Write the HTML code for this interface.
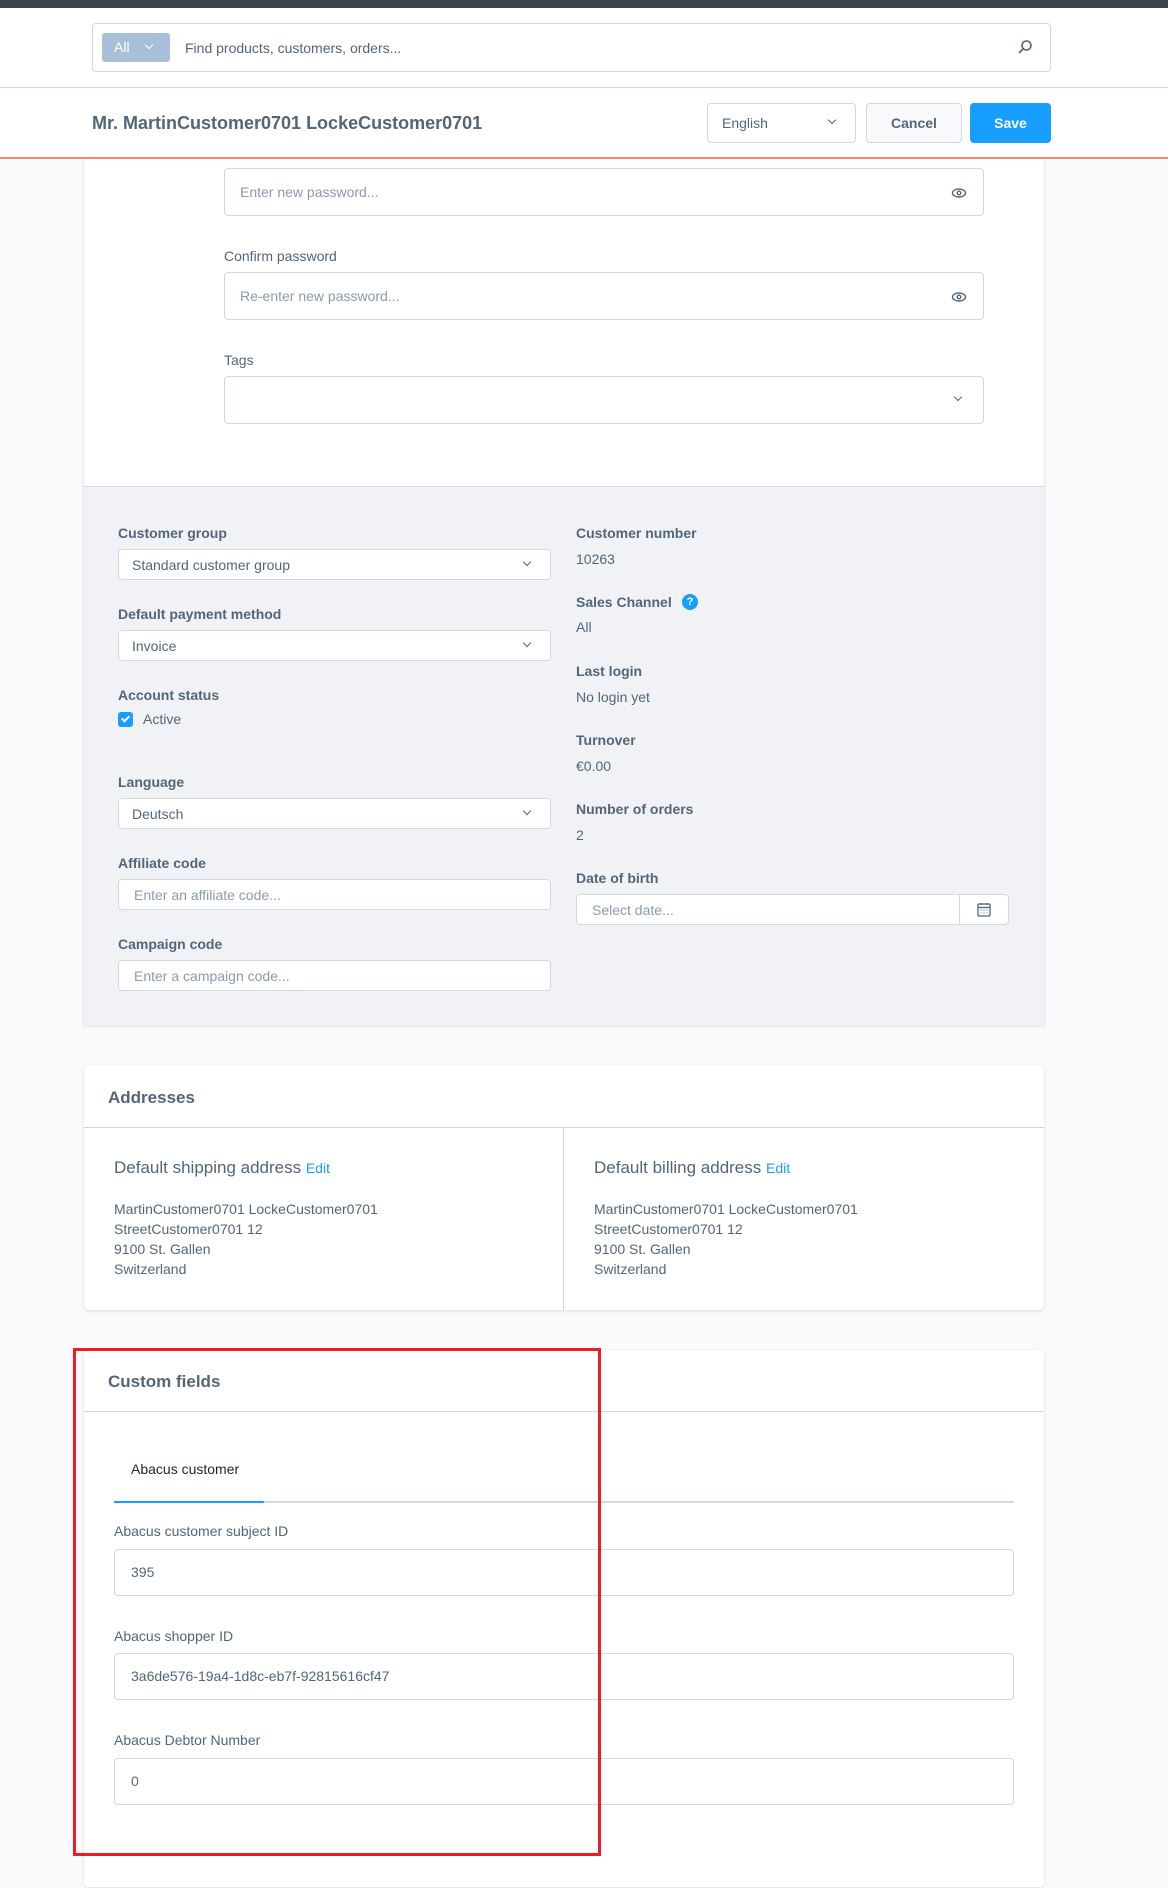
<!DOCTYPE html>
<html><head><meta charset="utf-8"><style>
*{box-sizing:border-box;margin:0;padding:0}
body{width:1168px;height:1888px;overflow:hidden;background:#f9fafb;font-family:"Liberation Sans",sans-serif;color:#52667a;position:relative;font-size:14px}
.a{position:absolute}
.inp{position:absolute;background:#fff;border:1px solid #d1d9e0;border-radius:4px}
.ph{position:absolute;color:#8a9bad;font-size:14px}
.lbl{position:absolute;font-size:14px;color:#52667a}
.b{font-weight:bold}
.chev{position:absolute;width:7px;height:7px;border-right:1.5px solid #52667a;border-bottom:1.5px solid #52667a;transform:rotate(45deg)}
</style></head><body>
<div class="a" style="left:0;top:0;width:1168px;height:8px;background:#3e4550"></div>
<div class="a" style="left:0;top:8px;width:1168px;height:80px;background:#fff;border-bottom:1px solid #d1d9e0"></div>
<div class="inp" style="left:92px;top:23px;width:959px;height:49px"></div>
<div class="a" style="left:102px;top:33px;width:68px;height:29px;background:#a9bfd9;border-radius:3px;color:#fff;font-size:14px;line-height:29px;padding-left:12px">All</div>
<div class="chev" style="left:146px;top:42px;border-color:#fff;width:6px;height:6px"></div>
<div class="ph" style="left:185px;top:40px;color:#52667a">Find products, customers, orders...</div>
<svg class="a" style="left:1017px;top:39px" width="16" height="16" viewBox="0 0 16 16"><circle cx="9.5" cy="6.5" r="4.5" fill="none" stroke="#52667a" stroke-width="1.6"/><path d="M6.3 9.7L2 14" stroke="#52667a" stroke-width="1.8"/></svg>
<div class="a" style="left:0;top:89px;width:1168px;height:69px;background:#fff"></div>
<div class="a b" style="left:92px;top:113px;font-size:18px;color:#52667a">Mr. MartinCustomer0701 LockeCustomer0701</div>
<div class="inp" style="left:707px;top:103px;width:149px;height:40px"></div>
<div class="a" style="left:722px;top:115px;font-size:14px">English</div>
<div class="chev" style="left:829px;top:117px;width:6px;height:6px"></div>
<div class="a" style="left:866px;top:103px;width:96px;height:40px;background:#f9fafb;border:1px solid #d1d9e0;border-radius:4px;text-align:center;line-height:38px;font-weight:bold">Cancel</div>
<div class="a" style="left:970px;top:103px;width:81px;height:40px;background:#189eff;border-radius:4px;text-align:center;line-height:40px;font-weight:bold;color:#fff">Save</div>
<div class="a" style="left:0;top:157px;width:1168px;height:2px;background:#f38c63"></div>
<!-- main card -->
<div class="a" style="left:83px;top:159px;width:962px;height:866px;background:#fff;border-left:1px solid #e6eaee;border-right:1px solid #e6eaee;box-shadow:0 2px 2px rgba(0,0,0,.08)"></div>
<div class="inp" style="left:224px;top:168px;width:760px;height:48px"></div>
<div class="ph" style="left:240px;top:184px">Enter new password...</div>
<svg class="a" style="left:951px;top:186px" width="16" height="14" viewBox="0 0 16 14"><ellipse cx="8" cy="7" rx="6.5" ry="4" fill="none" stroke="#52667a" stroke-width="1.4"/><circle cx="8" cy="7" r="1.8" fill="none" stroke="#52667a" stroke-width="1.4"/></svg>
<div class="lbl" style="left:224px;top:248px">Confirm password</div>
<div class="inp" style="left:224px;top:272px;width:760px;height:48px"></div>
<div class="ph" style="left:240px;top:288px">Re-enter new password...</div>
<svg class="a" style="left:951px;top:290px" width="16" height="14" viewBox="0 0 16 14"><ellipse cx="8" cy="7" rx="6.5" ry="4" fill="none" stroke="#52667a" stroke-width="1.4"/><circle cx="8" cy="7" r="1.8" fill="none" stroke="#52667a" stroke-width="1.4"/></svg>
<div class="lbl" style="left:224px;top:352px">Tags</div>
<div class="inp" style="left:224px;top:376px;width:760px;height:48px"></div>
<div class="chev" style="left:955px;top:394px;width:6px;height:6px"></div>
<!-- gray section -->
<div class="a" style="left:84px;top:486px;width:960px;height:539px;background:#f0f2f5;border-top:1px solid #d1d9e0"></div>
<div class="lbl b" style="left:118px;top:525px">Customer group</div>
<div class="inp" style="left:118px;top:549px;width:433px;height:31px"></div>
<div class="a" style="left:132px;top:557px">Standard customer group</div>
<div class="chev" style="left:524px;top:559px;width:6px;height:6px"></div>
<div class="lbl b" style="left:118px;top:606px">Default payment method</div>
<div class="inp" style="left:118px;top:630px;width:433px;height:31px"></div>
<div class="a" style="left:132px;top:638px">Invoice</div>
<div class="chev" style="left:524px;top:640px;width:6px;height:6px"></div>
<div class="lbl b" style="left:118px;top:687px">Account status</div>
<div class="a" style="left:118px;top:712px;width:15px;height:15px;background:#189eff;border-radius:3px"></div>
<div class="a" style="left:123px;top:714px;width:5px;height:8px;border-right:2px solid #fff;border-bottom:2px solid #fff;transform:rotate(45deg)"></div>
<div class="a" style="left:143px;top:711px">Active</div>
<div class="lbl b" style="left:118px;top:774px">Language</div>
<div class="inp" style="left:118px;top:798px;width:433px;height:31px"></div>
<div class="a" style="left:132px;top:806px">Deutsch</div>
<div class="chev" style="left:524px;top:808px;width:6px;height:6px"></div>
<div class="lbl b" style="left:118px;top:855px">Affiliate code</div>
<div class="inp" style="left:118px;top:879px;width:433px;height:31px"></div>
<div class="ph" style="left:134px;top:887px">Enter an affiliate code...</div>
<div class="lbl b" style="left:118px;top:936px">Campaign code</div>
<div class="inp" style="left:118px;top:960px;width:433px;height:31px"></div>
<div class="ph" style="left:134px;top:968px">Enter a campaign code...</div>
<div class="lbl b" style="left:576px;top:525px">Customer number</div>
<div class="a" style="left:576px;top:551px">10263</div>
<div class="lbl b" style="left:576px;top:594px">Sales Channel</div>
<div class="a" style="left:682px;top:594px;width:16px;height:16px;border-radius:50%;background:#189eff;color:#fff;font-size:11px;font-weight:bold;text-align:center;line-height:16px">?</div>
<div class="a" style="left:576px;top:619px">All</div>
<div class="lbl b" style="left:576px;top:663px">Last login</div>
<div class="a" style="left:576px;top:689px">No login yet</div>
<div class="lbl b" style="left:576px;top:732px">Turnover</div>
<div class="a" style="left:576px;top:758px">€0.00</div>
<div class="lbl b" style="left:576px;top:801px">Number of orders</div>
<div class="a" style="left:576px;top:827px">2</div>
<div class="lbl b" style="left:576px;top:870px">Date of birth</div>
<div class="inp" style="left:576px;top:894px;width:433px;height:31px"></div>
<div class="a" style="left:959px;top:895px;width:1px;height:29px;background:#d1d9e0"></div>
<div class="ph" style="left:592px;top:902px">Select date...</div>
<svg class="a" style="left:977px;top:902px" width="14" height="15" viewBox="0 0 14 15"><rect x="1" y="2" width="12" height="12" rx="1" fill="none" stroke="#52667a" stroke-width="1.3"/><path d="M1 5.5H13M4 1v2M10 1v2" stroke="#52667a" stroke-width="1.3"/><path d="M3.5 8h1M6.5 8h1M9.5 8h1M3.5 11h1M6.5 11h1M9.5 11h1" stroke="#52667a" stroke-width="1"/></svg>
<!-- addresses -->
<div class="a" style="left:84px;top:1065px;width:960px;height:245px;background:#fff;border-radius:5px;box-shadow:0 1px 3px rgba(0,0,0,.12)"></div>
<div class="a b" style="left:108px;top:1088px;font-size:17px">Addresses</div>
<div class="a" style="left:84px;top:1127px;width:960px;height:1px;background:#d1d9e0"></div>
<div class="a" style="left:563px;top:1128px;width:1px;height:182px;background:#d1d9e0"></div>
<div class="a" style="left:114px;top:1158px;font-size:17px">Default shipping address <span style="color:#189eff;font-size:14px">Edit</span></div>
<div class="a" style="left:114px;top:1199px;line-height:20px">MartinCustomer0701 LockeCustomer0701<br>StreetCustomer0701 12<br>9100 St. Gallen<br>Switzerland</div>
<div class="a" style="left:594px;top:1158px;font-size:17px">Default billing address <span style="color:#189eff;font-size:14px">Edit</span></div>
<div class="a" style="left:594px;top:1199px;line-height:20px">MartinCustomer0701 LockeCustomer0701<br>StreetCustomer0701 12<br>9100 St. Gallen<br>Switzerland</div>
<!-- custom fields -->
<div class="a" style="left:84px;top:1350px;width:960px;height:537px;background:#fff;border-radius:5px;box-shadow:0 1px 3px rgba(0,0,0,.12)"></div>
<div class="a b" style="left:108px;top:1372px;font-size:17px">Custom fields</div>
<div class="a" style="left:84px;top:1411px;width:960px;height:1px;background:#d1d9e0"></div>
<div class="a" style="left:131px;top:1461px;color:#1a2633">Abacus customer</div>
<div class="a" style="left:114px;top:1501px;width:900px;height:2px;background:#d1d9e0"></div>
<div class="a" style="left:114px;top:1501px;width:150px;height:2px;background:#189eff"></div>
<div class="lbl" style="left:114px;top:1523px">Abacus customer subject ID</div>
<div class="inp" style="left:114px;top:1549px;width:900px;height:47px"></div>
<div class="a" style="left:131px;top:1564px">395</div>
<div class="lbl" style="left:114px;top:1628px">Abacus shopper ID</div>
<div class="inp" style="left:114px;top:1653px;width:900px;height:47px"></div>
<div class="a" style="left:131px;top:1668px">3a6de576-19a4-1d8c-eb7f-92815616cf47</div>
<div class="lbl" style="left:114px;top:1732px">Abacus Debtor Number</div>
<div class="inp" style="left:114px;top:1758px;width:900px;height:47px"></div>
<div class="a" style="left:131px;top:1773px">0</div>
<div class="a" style="left:73px;top:1348px;width:528px;height:508px;border:3px solid #ee1c24"></div>
</body></html>
